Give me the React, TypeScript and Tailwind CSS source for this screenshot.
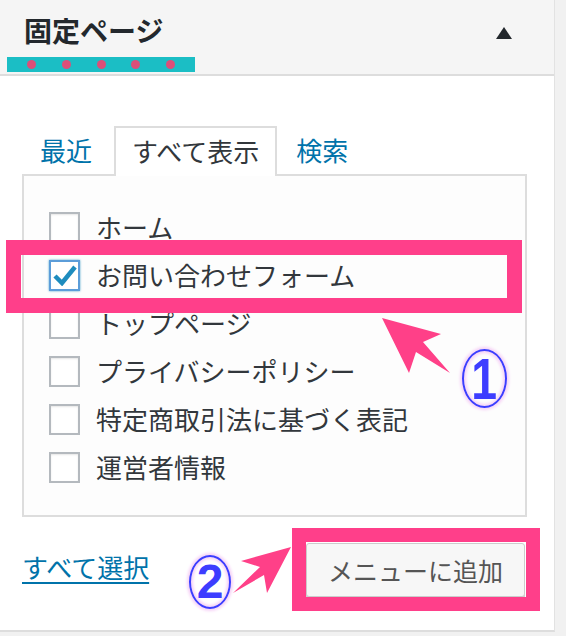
import React from "react";

const pages = [
  { label: "ホーム", checked: false },
  { label: "お問い合わせフォーム", checked: true },
  { label: "トップページ", checked: false },
  { label: "プライバシーポリシー", checked: false },
  { label: "特定商取引法に基づく表記", checked: false },
  { label: "運営者情報", checked: false },
];

const Checkbox = ({ checked }: { checked: boolean }) => (
  <span
    className={
      checked
        ? "flex h-[31px] w-[31px] shrink-0 items-center justify-center border-2 border-[#5b9dd9] bg-white shadow-[0_0_2px_rgba(30,140,190,0.8)]"
        : "flex h-[31px] w-[31px] shrink-0 items-center justify-center border-2 border-[#b4b9be] bg-white shadow-[inset_0_1px_2px_rgba(0,0,0,0.1)]"
    }
  >
    {checked && (
      <svg width="24" height="22" viewBox="0 0 24 22">
        <path d="M2 12 L9 19 L22 3" fill="none" stroke="#1e8cbe" strokeWidth="4.5" strokeLinejoin="miter" />
      </svg>
    )}
  </span>
);

export default function App() {
  return (
    <div className="relative h-[636px] w-[566px] overflow-hidden bg-[#f1f1f1] font-['Noto_Sans_CJK_JP','Noto_Sans',sans-serif]">
      <div className="h-[632px] w-[555px] border-r border-b-2 border-r-[#e2e2e2] border-b-[#dddddd] bg-white">
        {/* header */}
        <div className="h-[76px] border-b-2 border-[#dddddd] bg-[#f5f5f5]">
          <div className="flex h-[57px] items-start justify-between pl-[24px] pr-[42px] pt-[12px]">
            <h2 className="text-[28px] font-bold leading-[36px] text-[#23282d]">固定ページ</h2>
            <svg width="16" height="12" viewBox="0 0 16 12" className="mt-[15px]">
              <polygon points="8,0 16,12 0,12" fill="#23282d" />
            </svg>
          </div>
          <div className="ml-[7px] flex h-[15px] w-[188px] items-center justify-between bg-[#1bbec5] px-[20px]">
            {[0, 1, 2, 3, 4].map((i) => (
              <span key={i} className="h-[9px] w-[9px] rounded-full bg-[#dc4f79]" />
            ))}
          </div>
        </div>

        {/* body */}
        <div className="pt-[50px]">
          <div className="ml-[22px] flex items-end text-[26px] leading-none">
            <span className="flex h-[48px] items-center px-[18px] text-[#0073aa]">最近</span>
            <span className="relative z-10 -mb-[2px] ml-[4px] flex h-[50px] items-center border-2 border-b-0 border-[#dddddd] bg-white px-[16px] pb-[2px] text-[#32373c]">
              すべて表示
            </span>
            <span className="flex h-[48px] items-center px-[19px] text-[#0073aa]">検索</span>
          </div>
          <div className="ml-[22px] h-[343px] w-[505px] border-2 border-[#dddddd] bg-[#fdfdfd] pb-[24px] pl-[25px] pt-[27px]">
            {pages.map((p) => (
              <label key={p.label} className="flex h-[48px] items-center gap-[16px] text-[26px] leading-none text-[#32373c]">
                <Checkbox checked={p.checked} />
                <span>{p.label}</span>
              </label>
            ))}
          </div>
          <div className="ml-[22px] mt-[26px] flex w-[503px] items-center justify-between">
            <a className="-mt-[6px] text-[26px] leading-none text-[#0073aa] underline underline-offset-[4px]">すべて選択</a>
            <button className="h-[54px] w-[219px] rounded-[3px] border border-[#cccccc] bg-[#f7f7f7] text-[25px] leading-none text-[#555555] shadow-[0_2px_0_#cccccc]">
              メニューに追加
            </button>
          </div>
        </div>
      </div>

      {/* annotations */}
      <div className="absolute left-[6px] top-[240px] h-[73px] w-[516px] border-[15px] border-[#ff3f8a]" />
      <div className="absolute left-[292px] top-[528px] h-[83px] w-[248px] border-[14px] border-[#ff3f8a]" />
      <svg className="absolute left-0 top-0" width="566" height="636" viewBox="0 0 566 636">
        <polygon points="382,318 441,334 423,342 450,373 416,352 409,373" fill="#ff4088" />
        <polygon points="291,547 241,561 260,567 233,593 264,575 267,593" fill="#ff4088" />
      </svg>
      <div className="absolute left-[462px] top-[349px] flex h-[59px] w-[45px] items-center justify-center rounded-[50%] border-2 border-[#3d3dff] shadow-[0_0_3px_2px_#f6d2f6,inset_0_0_3px_2px_#f6d2f6]">
        <span className="scale-x-[0.8] font-['Liberation_Sans',sans-serif] text-[58px] font-bold leading-none text-[#3d3dff]">1</span>
      </div>
      <div className="absolute left-[189px] top-[555px] flex h-[54px] w-[42px] items-center justify-center rounded-[50%] border-2 border-[#3d3dff] shadow-[0_0_3px_2px_#f6d2f6,inset_0_0_3px_2px_#f6d2f6]">
        <span className="font-['Liberation_Sans',sans-serif] text-[48px] font-bold leading-none text-[#3d3dff]">2</span>
      </div>
    </div>
  );
}
